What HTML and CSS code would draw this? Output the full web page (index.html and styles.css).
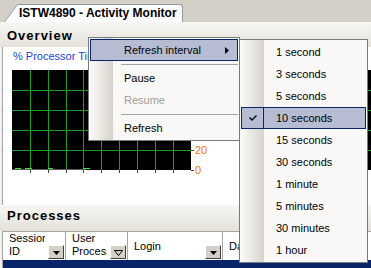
FILE: index.html
```html
<!DOCTYPE html>
<html lang="en">
<head>
  <meta charset="UTF-8">
  <meta name="viewport" content="width=device-width, initial-scale=1.0">
  <title>ISTW4890 - Activity Monitor</title>
  <link rel="stylesheet" href="styles.css">
</head>
<body>
  <!--TABS-->
  <div class="tabstrip">
    <div class="tab">
      <svg class="tab-slant" width="14" height="18" viewBox="0 0 14 18">
        <polygon points="0,18 13.5,0.5 14,0.5 14,18" fill="#fcfcfe"/>
        <line x1="0.5" y1="18" x2="13.5" y2="0.5" stroke="#919b9c"/>
      </svg>
      <span class="tab-label">ISTW4890 - Activity Monitor</span>
    </div>
  </div>

  <!--OVERVIEW-->
  <div class="band band-overview">Overview</div>
  <div class="overview">
    <p class="counter">% Processor Time</p>
    <div class="charts">
      <svg class="chart" width="179" height="103" viewBox="0 0 179 103">
        <rect width="179" height="100" fill="#000"/>
        <g stroke="#1e9e1e">
          <path d="M18.5 0V100M36.5 0V100M54.5 0V100M71.5 0V100M89.5 0V100M107.5 0V100M125.5 0V100M143.5 0V100M161.5 0V100"/>
          <path d="M0 20.5H179M0 40.5H179M0 60.5H179M0 80.5H179"/>
        </g>
        <path d="M3 98.5H9M13 98.5H20M36 98.5H41M71 98.5H78" stroke="#3ee03e"/>
        <path d="M0 99.5H74" stroke="#5a5a5a"/>
        <path d="M18.5 100V103M36.5 100V103M54.5 100V103M71.5 100V103M89.5 100V103M107.5 100V103M125.5 100V103M143.5 100V103M161.5 100V103" stroke="#404040"/>
      </svg>
      <div class="axis">
        <span class="tick">100</span>
        <span class="tick">80</span>
        <span class="tick">60</span>
        <span class="tick">40</span>
        <span class="tick">20</span>
        <span class="tick">0</span>
      </div>
      <svg class="chart" width="179" height="103" viewBox="0 0 179 103">
        <rect width="179" height="100" fill="#000"/>
        <path d="M0 20.5H179M0 40.5H179M0 60.5H179M0 80.5H179" stroke="#1e9e1e"/>
      </svg>
    </div>
  </div>

  <!--PROCESSES-->
  <div class="band band-processes">Processes</div>
  <div class="grid-head">
    <div class="col col-session">
      <span class="col-label">Session ID</span>
      <span class="drop"><svg width="7" height="4" viewBox="0 0 7 4"><polygon points="0,0 7,0 3.5,4"/></svg></span>
    </div>
    <div class="col col-user">
      <span class="col-label">User Processes</span>
      <span class="drop"><svg width="9" height="6" viewBox="0 0 9 6"><polygon points="0.5,0.5 8.5,0.5 4.5,5.5" fill="none" stroke="#000"/></svg></span>
    </div>
    <div class="col col-login">
      <span class="col-label col-label-single">Login</span>
      <span class="drop"><svg width="7" height="4" viewBox="0 0 7 4"><polygon points="0,0 7,0 3.5,4"/></svg></span>
    </div>
    <div class="col col-date">
      <span class="col-label col-label-single">Date</span>
    </div>
  </div>
  <div class="grid-row"></div>

  <!--CONTEXT MENU-->
  <div class="menu main-menu">
    <div class="menu-item is-hot">
      Refresh interval
      <svg class="menu-arrow" width="4" height="7" viewBox="0 0 4 7"><polygon points="0,0 4,3.5 0,7"/></svg>
    </div>
    <div class="menu-sep"></div>
    <div class="menu-item">Pause</div>
    <div class="menu-item is-disabled">Resume</div>
    <div class="menu-sep"></div>
    <div class="menu-item">Refresh</div>
  </div>

  <div class="menu sub-menu">
    <div class="menu-item"><span class="check"></span>1 second</div>
    <div class="menu-item"><span class="check"></span>3 seconds</div>
    <div class="menu-item"><span class="check"></span>5 seconds</div>
    <div class="menu-item is-hot"><span class="check"><svg width="8" height="6" viewBox="0 0 8 6"><polyline points="0.5,2.5 3,5 7.5,0.5" fill="none" stroke="#000" stroke-width="1.4"/></svg></span>10 seconds</div>
    <div class="menu-item"><span class="check"></span>15 seconds</div>
    <div class="menu-item"><span class="check"></span>30 seconds</div>
    <div class="menu-item"><span class="check"></span>1 minute</div>
    <div class="menu-item"><span class="check"></span>5 minutes</div>
    <div class="menu-item"><span class="check"></span>30 minutes</div>
    <div class="menu-item"><span class="check"></span>1 hour</div>
  </div>
</body>
</html>
```

FILE: styles.css
```css
body {
  margin: 0;
  width: 371px;
  height: 268px;
  overflow: hidden;
  position: relative;
  background: #f2f1ed;
  font-family: "Liberation Sans", Arial, sans-serif;
  font-size: 11px;
  color: #000;
}

/* tabs */
.tabstrip {
  height: 22px;
  display: flex;
  align-items: flex-end;
  padding-left: 4px;
  background: #d4d0c8;
}
.tab {
  display: flex;
  height: 18px;
}
.tab-slant {
  display: block;
}
.tab-label {
  padding: 0 5px 0 1px;
  background: #fcfcfe;
  border-top: 1px solid #919b9c;
  border-right: 1px solid #919b9c;
  border-top-right-radius: 3px;
  font-size: 12px;
  font-weight: bold;
  line-height: 16px;
  white-space: nowrap;
}

/* section headers */
.band {
  box-sizing: border-box;
  padding-left: 7px;
  background: linear-gradient(#f7f6f3, #e3e1da);
  font-size: 13px;
  font-weight: bold;
  letter-spacing: 1px;
}
.band-overview {
  height: 25px;
  padding-top: 2px;
  line-height: 23px;
}
.band-processes {
  height: 26px;
  line-height: 22px;
}

/* overview */
.overview {
  height: 158px;
  box-sizing: border-box;
  margin-left: 2px;
  padding: 3px 0 0 9px;
  border-left: 1px solid #a5a5a5;
  background: #fff;
  overflow: hidden;
}
.counter {
  margin: 0 0 7px 1px;
  line-height: 13px;
  color: #1c44d0;
  white-space: nowrap;
}
.charts {
  display: flex;
  align-items: flex-start;
}
.chart {
  display: block;
  flex: none;
}
.axis {
  flex: none;
  width: 177px;
  display: flex;
  flex-direction: column;
  margin-top: -10px;
}
.tick {
  display: flex;
  align-items: center;
  height: 20px;
  color: #f07800;
}
.tick::before {
  content: "";
  width: 3px;
  height: 1px;
  margin-right: 1px;
  background: #404040;
}

/* processes grid */
.grid-head {
  display: flex;
  height: 29px;
  box-sizing: border-box;
  margin-left: 2px;
  border-left: 1px solid #a5a5a5;
  border-top: 1px solid #a5a5a5;
  background: #fff;
}
.col {
  flex: none;
  display: flex;
  box-sizing: border-box;
  padding-left: 6px;
  border-right: 1px solid #a5a5a5;
}
.col-session {
  width: 63px;
}
.col-user {
  width: 62px;
}
.col-login {
  width: 95px;
}
.col-date {
  flex: 1;
  border-right: none;
}
.col-label {
  flex: 1;
  min-width: 0;
  margin-right: 3px;
  overflow: hidden;
  line-height: 13px;
}
.col-label-single {
  align-self: center;
}
.drop {
  align-self: flex-end;
  display: flex;
  align-items: center;
  justify-content: center;
  width: 16px;
  height: 14px;
  box-sizing: border-box;
  margin: 0 1px 1px 0;
  padding-top: 2px;
  background: #d4d0c8;
  border: 1px solid;
  border-color: #fff #404040 #404040 #fff;
}
.drop svg {
  display: block;
}
.grid-row {
  height: 10px;
  margin-left: 2px;
  border-left: 1px solid #a5a5a5;
  background: #0a246a;
}

/* context menu */
.menu {
  position: absolute;
  box-sizing: border-box;
  padding: 1px;
  border: 1px solid #7a7a7a;
  background: linear-gradient(to right, #fcfcfa, #d6d3cb 24px, #f9f8f6 24px);
}
.main-menu {
  left: 88px;
  top: 37px;
  width: 152px;
}
.sub-menu {
  left: 239px;
  top: 39px;
  width: 129px;
}
.menu-item {
  display: flex;
  align-items: center;
  height: 22px;
  box-sizing: border-box;
  padding-left: 33px;
  border: 1px solid transparent;
  white-space: nowrap;
}
.sub-menu .menu-item {
  padding-left: 0;
}
.menu-item.is-hot {
  background: #b6bdd2;
  border-color: #0a246a;
}
.menu-item.is-disabled {
  color: #9d9d9d;
}
.menu-arrow {
  margin-left: auto;
  margin-right: 8px;
}
.menu-sep {
  height: 1px;
  margin: 3px 0 2px 31px;
  background: #a6a6a6;
}
.check {
  display: flex;
  align-items: center;
  justify-content: center;
  width: 21px;
  height: 100%;
  margin-right: 12px;
  border-right: 1px solid transparent;
}
.is-hot .check {
  border-right-color: #0a246a;
}
```
